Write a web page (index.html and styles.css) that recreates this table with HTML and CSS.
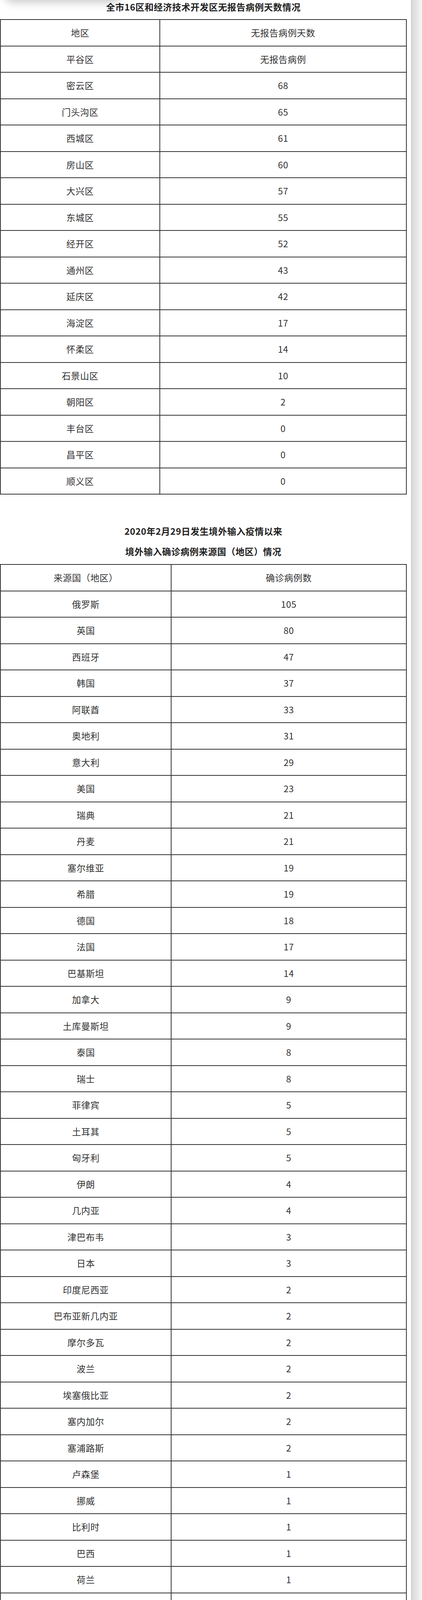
FILE: index.html
```html
<!DOCTYPE html>
<html lang="zh-CN">
<head>
<meta charset="utf-8">
<title>疫情情况</title>
<link rel="stylesheet" href="styles.css">
</head>
<body>
<div class="page">
  <div class="top-shadow"></div>
  <main class="content">
    <p class="title title-first">全市16区和经济技术开发区无报告病例天数情况</p>
    <table class="data data-districts">
      <colgroup><col class="c1"><col class="c2"></colgroup>
      <tbody>
        <tr><td>地区</td><td>无报告病例天数</td></tr>
        <tr><td>平谷区</td><td>无报告病例</td></tr>
        <tr><td>密云区</td><td>68</td></tr>
        <tr><td>门头沟区</td><td>65</td></tr>
        <tr><td>西城区</td><td>61</td></tr>
        <tr><td>房山区</td><td>60</td></tr>
        <tr><td>大兴区</td><td>57</td></tr>
        <tr><td>东城区</td><td>55</td></tr>
        <tr><td>经开区</td><td>52</td></tr>
        <tr><td>通州区</td><td>43</td></tr>
        <tr><td>延庆区</td><td>42</td></tr>
        <tr><td>海淀区</td><td>17</td></tr>
        <tr><td>怀柔区</td><td>14</td></tr>
        <tr><td>石景山区</td><td>10</td></tr>
        <tr><td>朝阳区</td><td>2</td></tr>
        <tr><td>丰台区</td><td>0</td></tr>
        <tr><td>昌平区</td><td>0</td></tr>
        <tr><td>顺义区</td><td>0</td></tr>
      </tbody>
    </table>

    <p class="title title-second">2020年2月29日发生境外输入疫情以来</p>
    <p class="title title-third">境外输入确诊病例来源国（地区）情况</p>
    <table class="data data-sources">
      <colgroup><col class="c1"><col class="c2"></colgroup>
      <tbody>
        <tr><td>来源国（地区）</td><td>确诊病例数</td></tr>
        <tr><td>俄罗斯</td><td>105</td></tr>
        <tr><td>英国</td><td>80</td></tr>
        <tr><td>西班牙</td><td>47</td></tr>
        <tr><td>韩国</td><td>37</td></tr>
        <tr><td>阿联酋</td><td>33</td></tr>
        <tr><td>奥地利</td><td>31</td></tr>
        <tr><td>意大利</td><td>29</td></tr>
        <tr><td>美国</td><td>23</td></tr>
        <tr><td>瑞典</td><td>21</td></tr>
        <tr><td>丹麦</td><td>21</td></tr>
        <tr><td>塞尔维亚</td><td>19</td></tr>
        <tr><td>希腊</td><td>19</td></tr>
        <tr><td>德国</td><td>18</td></tr>
        <tr><td>法国</td><td>17</td></tr>
        <tr><td>巴基斯坦</td><td>14</td></tr>
        <tr><td>加拿大</td><td>9</td></tr>
        <tr><td>土库曼斯坦</td><td>9</td></tr>
        <tr><td>泰国</td><td>8</td></tr>
        <tr><td>瑞士</td><td>8</td></tr>
        <tr><td>菲律宾</td><td>5</td></tr>
        <tr><td>土耳其</td><td>5</td></tr>
        <tr><td>匈牙利</td><td>5</td></tr>
        <tr><td>伊朗</td><td>4</td></tr>
        <tr><td>几内亚</td><td>4</td></tr>
        <tr><td>津巴布韦</td><td>3</td></tr>
        <tr><td>日本</td><td>3</td></tr>
        <tr><td>印度尼西亚</td><td>2</td></tr>
        <tr><td>巴布亚新几内亚</td><td>2</td></tr>
        <tr><td>摩尔多瓦</td><td>2</td></tr>
        <tr><td>波兰</td><td>2</td></tr>
        <tr><td>埃塞俄比亚</td><td>2</td></tr>
        <tr><td>塞内加尔</td><td>2</td></tr>
        <tr><td>塞浦路斯</td><td>2</td></tr>
        <tr><td>卢森堡</td><td>1</td></tr>
        <tr><td>挪威</td><td>1</td></tr>
        <tr><td>比利时</td><td>1</td></tr>
        <tr><td>巴西</td><td>1</td></tr>
        <tr><td>荷兰</td><td>1</td></tr>
        <tr><td>墨西哥</td><td>1</td></tr>
        <tr><td>约旦</td><td>1</td></tr>
        <tr><td>赤道几内亚</td><td>1</td></tr>
        <tr><td>乌兹别克斯坦</td><td>1</td></tr>
        <tr><td>新加坡</td><td>1</td></tr>
        <tr><td>塔吉克斯坦</td><td>1</td></tr>
        <tr><td>赞比亚</td><td>1</td></tr>
        <tr><td>伊拉克</td><td>1</td></tr>
        <tr><td>南非</td><td>1</td></tr>
        <tr><td>毛里求斯</td><td>1</td></tr>
        <tr><td>孟加拉国</td><td>1</td></tr>
        <tr><td>埃及</td><td>1</td></tr>
        <tr><td>喀麦隆</td><td>1</td></tr>
        <tr><td>刚果（金）</td><td>1</td></tr>
        <tr><td>纳米比亚</td><td>1</td></tr>
        <tr><td>中国香港</td><td>274</td></tr>
        <tr><td>中国台湾</td><td>54</td></tr>
        <tr><td>合计</td><td>939</td></tr>
      </tbody>
    </table>
  </main>
  <aside class="side-strip"></aside>
</div>
</body>
</html>
```

FILE: styles.css
```css
html, body {
  margin: 0;
  padding: 0;
  background: #ffffff;
}

body {
  font-family: "Noto Sans CJK SC", "Noto Sans", sans-serif;
  color: #333333;
}

.page {
  position: relative;
  display: flex;
  width: 1080px;
  min-height: 5338px;
  overflow: hidden;
}

.top-shadow {
  position: absolute;
  top: -70px;
  left: 10px;
  width: 300px;
  height: 70px;
  border-radius: 24px;
  background: #ffffff;
  box-shadow: 0 6px 22px rgba(0, 0, 0, 0.22);
}

.content {
  width: 1041px;
  padding-right: 11px;
  flex: none;
}

.side-strip {
  flex: 1;
  border-left: 1px solid #bdbdbd;
  background: linear-gradient(to right, #d8d8d8, #f6f6f6);
}

.title {
  margin: 0;
  font-size: 23px;
  line-height: 34px;
  font-weight: 700;
  letter-spacing: 0.5px;
  text-align: center;
  color: #222222;
}

.title-first {
  margin-bottom: 15px;
}

.title-second {
  margin-top: 75.5px;
}

.title-third {
  margin-top: 18.5px;
  margin-bottom: 16px;
}

.data {
  width: 1041px;
  table-layout: fixed;
  border-collapse: separate;
  border-spacing: 0;
  border-top: 2px solid #333333;
  border-left: 2px solid #333333;
}

.data td {
  border-right: 2px solid #333333;
  border-bottom: 2px solid #333333;
  padding: 16px 0;
  line-height: 33.5px;
  font-size: 23px;
  letter-spacing: 0.5px;
  text-align: center;
  color: #333333;
  white-space: nowrap;
}

.data-districts .c1 { width: 408px; }
.data-districts .c2 { width: 631px; }

.data-sources .c1 { width: 437px; }
.data-sources .c2 { width: 602px; }
```
